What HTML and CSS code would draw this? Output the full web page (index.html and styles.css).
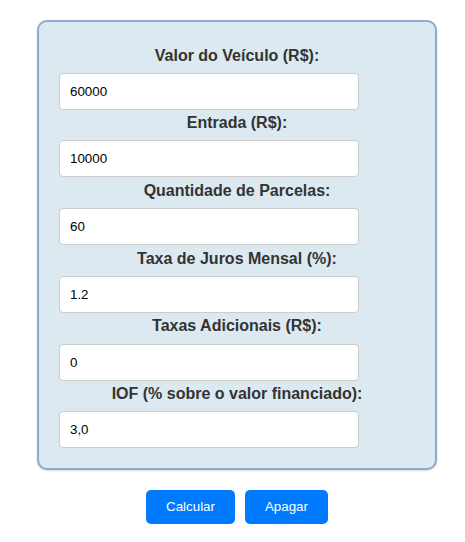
FILE: index.html
```html
<!DOCTYPE html>
<html lang="pt-BR">
<head>
<meta charset="utf-8">
<title>Simulador de Financiamento</title>
<link rel="stylesheet" href="styles.css">
</head>
<body>
<div class="page">
  <form class="card">
    <label class="field-label" for="valor">Valor do Veículo (R$):</label>
    <input class="field-input" id="valor" type="text" value="60000">
    <label class="field-label" for="entrada">Entrada (R$):</label>
    <input class="field-input" id="entrada" type="text" value="10000">
    <label class="field-label" for="parcelas">Quantidade de Parcelas:</label>
    <input class="field-input" id="parcelas" type="text" value="60">
    <label class="field-label" for="juros">Taxa de Juros Mensal (%):</label>
    <input class="field-input" id="juros" type="text" value="1.2">
    <label class="field-label" for="taxas">Taxas Adicionais (R$):</label>
    <input class="field-input" id="taxas" type="text" value="0">
    <label class="field-label" for="iof">IOF (% sobre o valor financiado):</label>
    <input class="field-input" id="iof" type="text" value="3,0">
  </form>
  <div class="actions">
    <button class="btn" type="button">Calcular</button>
    <button class="btn" type="button">Apagar</button>
  </div>
</div>
</body>
</html>
```

FILE: styles.css
```css
html, body {
  margin: 0;
  padding: 0;
  background: #ffffff;
}

body {
  font-family: "Liberation Sans", Arial, sans-serif;
}

.page {
  width: 400px;
  padding: 20px 0 0 37px;
  display: flex;
  flex-direction: column;
  align-items: stretch;
}

.card {
  box-sizing: border-box;
  width: 400px;
  padding: 20px;
  background: #dce9f0;
  border: 2px solid #8eabcb;
  border-radius: 10px;
  box-shadow: 0 1px 2px rgba(0, 0, 0, 0.15);
  display: flex;
  flex-direction: column;
  align-items: flex-start;
}

.field-label {
  align-self: stretch;
  display: block;
  margin: 4.5px 0 7.8px;
  text-align: center;
  font-size: 16px;
  font-weight: bold;
  line-height: 18.4px;
  color: #333333;
}

.field-input {
  box-sizing: border-box;
  width: 300px;
  height: 37px;
  margin: 0;
  padding: 0 10px;
  border: 1px solid #cccccc;
  border-radius: 4px;
  background: #ffffff;
  font-family: "Liberation Sans", Arial, sans-serif;
  font-size: 13.33px;
  color: #000000;
}

.actions {
  display: flex;
  justify-content: center;
  gap: 10px;
  margin-top: 20px;
}

.btn {
  padding: 9px 20px;
  border: none;
  border-radius: 5px;
  background: #007bff;
  color: #ffffff;
  font-family: "Liberation Sans", Arial, sans-serif;
  font-size: 13.33px;
  line-height: 16px;
  cursor: pointer;
}
```
